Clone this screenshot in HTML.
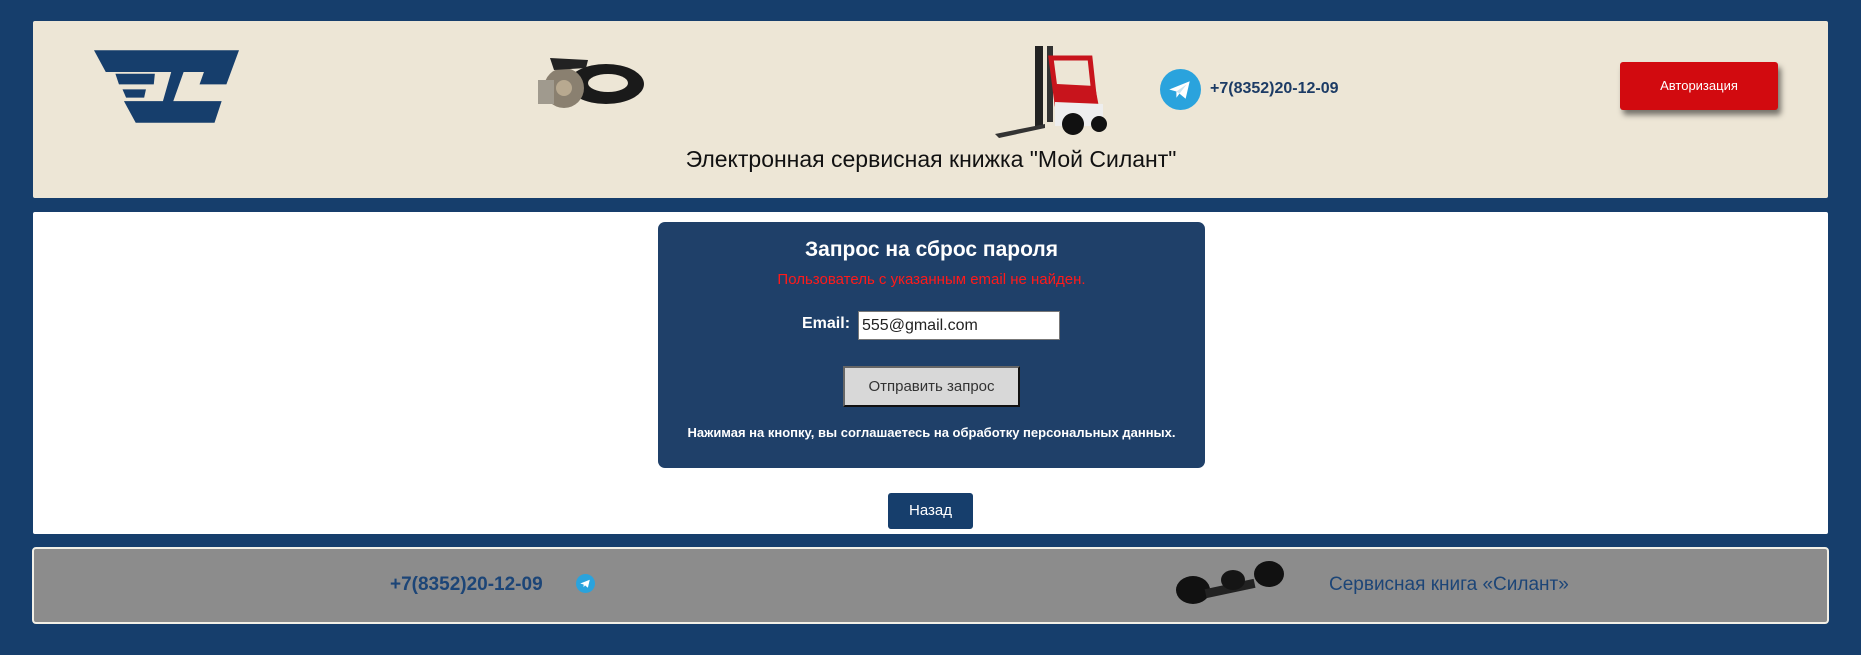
<!DOCTYPE html>
<html><head><meta charset="utf-8"><style>
*{box-sizing:border-box;margin:0;padding:0}
body{width:1861px;height:655px;background:#163e6c;position:relative;overflow:hidden;font-family:"Liberation Sans",sans-serif}
.abs{position:absolute}
#hdr{left:33px;top:21px;width:1795px;height:177px;background:#ede6d6;border-radius:2px}
#main{left:33px;top:212px;width:1795px;height:322px;background:#fff;border-radius:2px}
#ftr{left:32px;top:547px;width:1797px;height:77px;background:#8c8c8c;border:2px solid #f2efe6;border-radius:4px}
#form{left:658px;top:222px;width:547px;height:246px;background:#1f4069;border-radius:7px}
</style></head><body>
<div id="hdr" class="abs"></div>
<svg class="abs" style="left:94px;top:50px" width="145" height="73" viewBox="79 42 122 61">
<g fill="#163e6c">
<polygon points="79,42 201,42 190.4,70.7 167.8,70.7 171.5,60.3 88.9,60.3"/>
<polygon points="144.2,59.5 154.7,59.5 145.7,84.8 186.4,84.8 180.4,103 114.1,103 104.2,84.8 137,84.8"/>
<polygon points="97,61.8 130.2,61.8 129.3,70.7 100,70.7"/>
<polygon points="103,74.9 122.7,74.9 121.2,81.9 106,81.9"/>
</g>
</svg>
<svg class="abs" style="left:528px;top:50px" width="120" height="64" viewBox="0 0 120 64">
<ellipse cx="78" cy="34" rx="38" ry="20" fill="#1a1a1a"/><ellipse cx="80" cy="33" rx="20" ry="9" fill="#ede6d6"/>
<circle cx="36" cy="38" r="20" fill="#8a8070"/><circle cx="36" cy="38" r="8" fill="#b8a990"/>
<rect x="10" y="30" width="16" height="24" fill="#a09a8e"/><path d="M22 8 L60 10 L58 18 L26 20Z" fill="#222"/>
</svg>
<svg class="abs" style="left:995px;top:44px" width="115" height="94" viewBox="0 0 115 94">
<rect x="40" y="2" width="8" height="80" fill="#222"/><rect x="52" y="2" width="6" height="76" fill="#333"/>
<path d="M56 14 L95 14 L100 60 L62 60Z" fill="none" stroke="#c8141c" stroke-width="5"/>
<path d="M62 40 L100 42 L106 74 L62 78Z" fill="#c8141c"/><path d="M60 58 L108 60 L108 82 L60 82Z" fill="#eee"/>
<circle cx="78" cy="80" r="11" fill="#111"/><circle cx="104" cy="80" r="8" fill="#111"/>
<path d="M0 90 L50 80 L50 84 L4 94Z" fill="#333"/>
</svg>
<svg class="abs" style="left:1160px;top:69px" width="41" height="41" viewBox="0 0 40 40">
<circle cx="20" cy="20" r="20" fill="#2aa3dd"/><path d="M9 20 L29 12 L25 29 L19 24 L16 28 L16 22Z" fill="#fff"/><path d="M16 22 L26 15 L19 24Z" fill="#c9e4f2"/></svg>
<div class="abs" style="left:1210px;top:80px;font-size:16px;color:#1c3b65;font-weight:bold">+7(8352)20-12-09</div>
<div class="abs" style="left:1620px;top:62px;width:158px;height:48px;background:#d20a0f;border-radius:3px;box-shadow:3px 5px 6px rgba(0,0,0,.5);color:#fff;font-size:13px;text-align:center;line-height:48px">Авторизация</div>
<div class="abs" style="left:674px;top:146px;width:514px;text-align:center;font-size:23px;color:#111;white-space:nowrap">Электронная сервисная книжка "Мой Силант"</div>
<div id="main" class="abs"></div>
<div id="form" class="abs"></div>
<div class="abs" style="left:658px;top:238px;width:547px;text-align:center;color:#fff;font-size:21px;font-weight:bold">Запрос на сброс пароля</div>
<div class="abs" style="left:658px;top:271px;width:547px;text-align:center;color:#ff1a1a;font-size:15px">Пользователь с указанным email не найден.</div>
<div class="abs" style="left:802px;top:315px;color:#fff;font-size:16px;font-weight:bold">Email:</div>
<div class="abs" style="left:858px;top:311px;width:202px;height:29px;background:#fff;border:1px solid #777;font-size:16px;color:#222;padding:3px 3px;line-height:21px">555@gmail.com</div>
<div class="abs" style="left:843px;top:366px;width:177px;height:41px;background:#d8d8d8;border:2px solid;border-color:#666 #111 #111 #666;font-size:15px;color:#333;text-align:center;line-height:37px">Отправить запрос</div>
<div class="abs" style="left:658px;top:425px;width:547px;text-align:center;color:#fff;font-size:13px;font-weight:bold">Нажимая на кнопку, вы соглашаетесь на обработку персональных данных.</div>
<div class="abs" style="left:888px;top:493px;width:85px;height:36px;background:#163e6c;border-radius:3px;color:#fff;font-size:15px;text-align:center;line-height:36px">Назад</div>
<div id="ftr" class="abs"></div>
<div class="abs" style="left:390px;top:574px;color:#1c4577;font-size:19px;font-weight:bold">+7(8352)20-12-09</div>
<svg class="abs" style="left:576px;top:574px" width="19" height="19" viewBox="0 0 40 40">
<circle cx="20" cy="20" r="20" fill="#2aa3dd"/><path d="M9 20 L29 12 L25 29 L19 24 L16 28 L16 22Z" fill="#fff"/></svg>
<svg class="abs" style="left:1175px;top:556px" width="110" height="52" viewBox="0 0 110 52">
<ellipse cx="18" cy="34" rx="17" ry="14" fill="#111"/><rect x="30" y="28" width="50" height="9" fill="#222" transform="rotate(-12 55 32)"/>
<ellipse cx="58" cy="24" rx="12" ry="10" fill="#151515"/><ellipse cx="94" cy="18" rx="15" ry="13" fill="#111"/></svg>
<div class="abs" style="left:1329px;top:574px;color:#1c4577;font-size:19px">Сервисная книга «Силант»</div>
</body></html>
